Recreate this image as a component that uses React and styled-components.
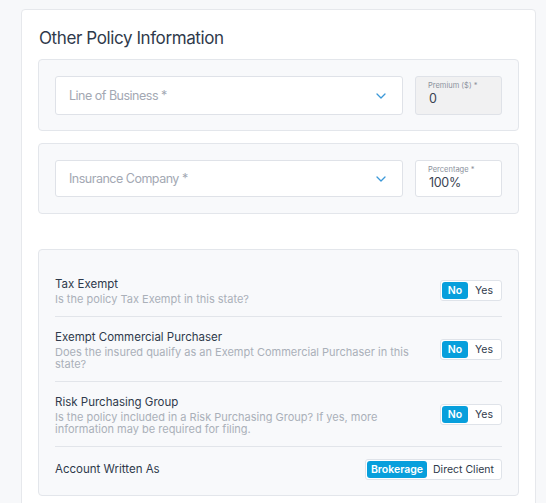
import React from "react";
import styled, { createGlobalStyle } from "styled-components";

const Global = createGlobalStyle`
  html, body {
    margin: 0;
    padding: 0;
    background: #f7f8fa;
    font-family: Inter, "Noto Sans", sans-serif;
  }
`;

const Page = styled.div`
  padding: 9px 10px 0 21px;
  height: 503px;
  box-sizing: border-box;
  overflow: hidden;
`;

const Card = styled.div`
  background: #ffffff;
  border: 1px solid #e6e8ec;
  border-radius: 4px;
  padding: 16px 16px 20px 16px;
  min-height: 520px;
  box-sizing: border-box;
`;

const Title = styled.h2`
  margin: 0 0 9px 1px;
  font-size: 17px;
  letter-spacing: -0.4px;
  line-height: 24px;
  font-weight: 400;
  color: #2f3a4b;
`;

const Panel = styled.div`
  background: #f8f9fb;
  border: 1px solid #e3e6eb;
  border-radius: 4px;
  padding: ${(p) => p.pad || "16px"};
  margin-top: ${(p) => p.top || 0}px;
`;

const FieldRow = styled.div`
  display: flex;
  gap: 12px;
`;

const Select = styled.div`
  flex: 1;
  height: ${(p) => p.h}px;
  box-sizing: border-box;
  background: #fff;
  border: 1px solid #dfe2e8;
  border-radius: 3px;
  display: flex;
  align-items: center;
  justify-content: space-between;
  padding: 0 16px 0 13px;
  font-size: 12.5px;
  letter-spacing: -0.5px;
  color: #a3a8b3;
`;

const Chevron = () => (
  <svg width="10" height="6" viewBox="0 0 10 6" fill="none">
    <path d="M1 1l4 4 4-4" stroke="#3b98d8" strokeWidth="1.3" strokeLinecap="round" strokeLinejoin="round" />
  </svg>
);

const SmallField = styled.div`
  width: 87px;
  height: ${(p) => p.h}px;
  box-sizing: border-box;
  background: ${(p) => (p.disabled ? "#f1f1f2" : "#fff")};
  border: 1px solid #dfe2e8;
  border-radius: 3px;
  padding: 4px 12px 0 12px;
  display: flex;
  flex-direction: column;
`;

const SmallLabel = styled.span`
  font-size: 7.5px;
  line-height: 10px;
  color: #8b919c;
`;

const SmallValue = styled.span`
  font-size: 12.5px;
  letter-spacing: -0.3px;
  line-height: 16px;
  color: #3a4352;
  margin-left: 1px;
`;

const OptionRow = styled.div`
  display: flex;
  align-items: center;
  justify-content: space-between;
  gap: 20px;
  padding: 11.5px 0;
  border-bottom: ${(p) => (p.last ? "none" : "1px solid #e2e5ea")};
`;

const OptionText = styled.div`
  display: flex;
  flex-direction: column;
  max-width: 370px;
`;

const OptionTitle = styled.div`
  font-size: 11.5px;
  line-height: 17px;
  color: #2f3a4b;
`;

const OptionHint = styled.div`
  font-size: 11px;
  line-height: 12px;
  color: #aab0b9;
`;

const Toggle = styled.div`
  display: flex;
  flex-shrink: 0;
  background: #fff;
  border: 1px solid #dfe3e9;
  border-radius: 3px;
  padding: 1px;
  box-sizing: border-box;
  height: 21px;
`;

const ToggleItem = styled.span`
  display: flex;
  align-items: center;
  justify-content: center;
  width: ${(p) => p.w}px;
  height: 17px;
  border-radius: 3px;
  font-size: 10.5px;
  background: ${(p) => (p.active ? "#079fdc" : "transparent")};
  color: ${(p) => (p.active ? "#ffffff" : "#2f3a4b")};
  font-weight: ${(p) => (p.active ? 600 : 400)};
`;

const options = [
  {
    title: "Tax Exempt",
    hint: "Is the policy Tax Exempt in this state?",
  },
  {
    title: "Exempt Commercial Purchaser",
    hint: "Does the insured qualify as an Exempt Commercial Purchaser in this state?",
  },
  {
    title: "Risk Purchasing Group",
    hint: "Is the policy included in a Risk Purchasing Group? If yes, more information may be required for filing.",
  },
];

export default function App() {
  return (
    <>
      <Global />
      <Page>
        <Card>
          <Title>Other Policy Information</Title>
          <Panel pad="16px 16px 15px 16px">
            <FieldRow>
              <Select h={39}>
                <span>Line of Business *</span>
                <Chevron />
              </Select>
              <SmallField h={39} disabled>
                <SmallLabel>Premium ($) *</SmallLabel>
                <SmallValue>0</SmallValue>
              </SmallField>
            </FieldRow>
          </Panel>
          <Panel top={12}>
            <FieldRow>
              <Select h={37}>
                <span>Insurance Company *</span>
                <Chevron />
              </Select>
              <SmallField h={37}>
                <SmallLabel>Percentage *</SmallLabel>
                <SmallValue>100%</SmallValue>
              </SmallField>
            </FieldRow>
          </Panel>
          <Panel top={35} pad="14px 16px 4px 16px">
            {options.map((o) => (
              <OptionRow key={o.title}>
                <OptionText>
                  <OptionTitle>{o.title}</OptionTitle>
                  <OptionHint>{o.hint}</OptionHint>
                </OptionText>
                <Toggle>
                  <ToggleItem w={26} active>No</ToggleItem>
                  <ToggleItem w={32}>Yes</ToggleItem>
                </Toggle>
              </OptionRow>
            ))}
            <OptionRow last>
              <OptionTitle>Account Written As</OptionTitle>
              <Toggle>
                <ToggleItem w={60} active>Brokerage</ToggleItem>
                <ToggleItem w={73}>Direct Client</ToggleItem>
              </Toggle>
            </OptionRow>
          </Panel>
        </Card>
      </Page>
    </>
  );
}
